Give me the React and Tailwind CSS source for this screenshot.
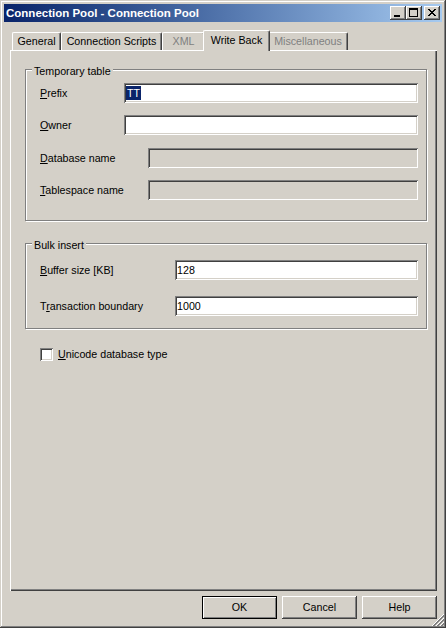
import React from "react";

const RAISED =
  "shadow-[inset_-1px_-1px_#404040,inset_1px_1px_#ffffff,inset_-2px_-2px_#808080,inset_2px_2px_#d4d0c8]";
const SUNKEN =
  "shadow-[inset_1px_1px_#808080,inset_-1px_-1px_#ffffff,inset_2px_2px_#404040,inset_-2px_-2px_#d4d0c8]";

function TitleBtn({ kind }) {
  return (
    <div className={`w-[16px] h-[14px] bg-[#d4d0c8] ${RAISED}`}>
      <svg width="16" height="14" viewBox="0 0 16 14" shapeRendering="crispEdges">
        {kind === "min" && <rect x="4" y="9" width="6" height="2" fill="#000" />}
        {kind === "max" && (
          <g fill="#000">
            <rect x="3" y="2" width="9" height="2" />
            <rect x="3" y="2" width="1" height="9" />
            <rect x="11" y="2" width="1" height="9" />
            <rect x="3" y="10" width="9" height="1" />
          </g>
        )}
        {kind === "close" && (
          <g fill="#000">
            {[0, 1, 2, 3, 4, 5, 6].map((i) => (
              <React.Fragment key={i}>
                <rect x={4 + i} y={3 + i} width="2" height="1" />
                <rect x={10 - i} y={3 + i} width="2" height="1" />
              </React.Fragment>
            ))}
          </g>
        )}
      </svg>
    </div>
  );
}

function Tab({ label, w, disabled, selected }) {
  if (selected) {
    return (
      <div
        className={`relative z-10 -mx-[2px] -mb-px h-[21px] ${w} bg-[#d4d0c8] border-l border-t border-white border-r border-r-[#404040] rounded-tl-[2px] rounded-tr-[2px] shadow-[inset_-1px_0_#808080] flex items-center justify-center pb-[2px] leading-[13px]`}
      >
        {label}
      </div>
    );
  }
  return (
    <div
      className={`h-[18px] ${w} bg-[#d4d0c8] border-l border-t border-white border-r border-r-[#404040] rounded-tl-[2px] rounded-tr-[2px] shadow-[inset_-1px_0_#808080] flex items-center justify-center leading-[13px] ${
        disabled ? "text-[#808080]" : "text-black"
      }`}
    >
      {label}
    </div>
  );
}

function Group({ title, className, children }) {
  return (
    <div
      className={`relative border border-[#808080] shadow-[inset_1px_1px_#ffffff,1px_1px_#ffffff] ${className}`}
    >
      <span className="absolute top-[-5px] left-[6px] px-[2px] bg-[#d4d0c8] leading-[13px]">
        {title}
      </span>
      {children}
    </div>
  );
}

function Field({ children, disabled, className = "" }) {
  return (
    <div
      className={`h-[20px] flex-1 min-w-0 ${disabled ? "bg-[#d4d0c8]" : "bg-white"} ${SUNKEN} pl-[2px] flex items-center leading-[14px] ${className}`}
    >
      {children}
    </div>
  );
}

function Row({ label, lw, className = "", children }) {
  return (
    <div className={`flex items-center h-[20px] ${className}`}>
      <div className={`${lw} shrink-0 leading-[13px] whitespace-nowrap`}>{label}</div>
      {children}
    </div>
  );
}

function Btn({ children, def }) {
  return (
    <div
      className={`w-[75px] h-[23px] flex items-center justify-center leading-[13px] ${
        def
          ? "border border-black shadow-[inset_1px_1px_#ffffff,inset_-1px_-1px_#808080]"
          : RAISED
      }`}
    >
      {children}
    </div>
  );
}

export default function App() {
  return (
    <div
      className={`relative w-[446px] h-[628px] bg-[#d4d0c8] p-[4px] flex flex-col text-[10.7px] text-black font-['Liberation_Sans',Arial,sans-serif] shadow-[inset_-1px_-1px_#404040,inset_1px_1px_#d4d0c8,inset_-2px_-2px_#808080,inset_2px_2px_#ffffff]`}
    >
      {/* Title bar */}
      <div className="h-[18px] shrink-0 flex items-center bg-linear-to-r from-[#0a246a] to-[#a6caf0] pl-[2px] pr-[2px]">
        <span className="text-white font-bold text-[11.5px] leading-[18px] whitespace-nowrap">
          Connection Pool - Connection Pool
        </span>
        <div className="ml-auto flex items-center">
          <TitleBtn kind="min" />
          <TitleBtn kind="max" />
          <div className="w-[2px]" />
          <TitleBtn kind="close" />
        </div>
      </div>

      {/* Content */}
      <div className="flex flex-col pl-[6px] pr-[5px]">
        {/* Tabs */}
        <div className="flex items-end h-[28px] pt-[8px] pl-[2px]">
          <Tab label="General" w="w-[49px]" />
          <Tab label="Connection Scripts" w="w-[101px]" />
          <Tab label="XML" w="w-[43px]" disabled />
          <Tab label="Write Back" w="w-[67px]" selected />
          <Tab label="Miscellaneous" w="w-[80px]" disabled />
        </div>

        {/* Panel */}
        <div
          className={`h-[541px] flex flex-col pt-[19px] pl-[15px] pr-[10px] shadow-[inset_1px_1px_#ffffff,inset_-1px_-1px_#404040,inset_-2px_-2px_#808080]`}
        >
          <Group title="Temporary table" className="pl-[14px] pr-[8px] pt-[13px] pb-[20px]">
            <Row
              lw="w-[84px]"
              label={
                <>
                  <u>P</u>refix
                </>
              }
            >
              <Field>
                <span className="bg-[#0a246a] text-white h-[14px] leading-[14px] px-[1px]">TT</span>
              </Field>
            </Row>
            <Row
              lw="w-[84px]"
              className="mt-[12px]"
              label={
                <>
                  <u>O</u>wner
                </>
              }
            >
              <Field />
            </Row>
            <Row
              lw="w-[108px]"
              className="mt-[13px]"
              label={
                <>
                  <u>D</u>atabase name
                </>
              }
            >
              <Field disabled />
            </Row>
            <Row
              lw="w-[108px]"
              className="mt-[12px]"
              label={
                <>
                  <u>T</u>ablespace name
                </>
              }
            >
              <Field disabled />
            </Row>
          </Group>

          <Group title="Bulk insert" className="mt-[22px] pl-[14px] pr-[8px] pt-[16px] pb-[12px]">
            <Row
              lw="w-[135px]"
              label={
                <>
                  <u>B</u>uffer size [KB]
                </>
              }
            >
              <Field className="pl-[1px]">128</Field>
            </Row>
            <Row
              lw="w-[135px]"
              className="mt-[16px]"
              label={
                <>
                  T<u>r</u>ansaction boundary
                </>
              }
            >
              <Field className="pl-[1px]">1000</Field>
            </Row>
          </Group>

          <div className="mt-[19px] ml-[15px] flex items-center">
            <div className={`w-[13px] h-[13px] bg-white ${SUNKEN}`} />
            <span className="ml-[5px] leading-[13px]">
              <u>U</u>nicode database type
            </span>
          </div>
        </div>

        {/* Buttons */}
        <div className="mt-[5px] flex justify-end gap-[5px]">
          <Btn def>OK</Btn>
          <Btn>Cancel</Btn>
          <Btn>Help</Btn>
        </div>
      </div>

      {/* Resize grip */}
      <svg
        className="absolute right-[2px] bottom-[2px]"
        width="13"
        height="13"
        viewBox="0 0 13 13"
        shapeRendering="crispEdges"
      >
        {[0, 4, 8].map((o) => (
          <g key={o}>
            <line x1={o + 1} y1="13" x2="13" y2={o + 1} stroke="#ffffff" />
            <line x1={o + 2} y1="13" x2="13" y2={o + 2} stroke="#808080" />
            <line x1={o + 3} y1="13" x2="13" y2={o + 3} stroke="#808080" />
          </g>
        ))}
      </svg>
    </div>
  );
}
